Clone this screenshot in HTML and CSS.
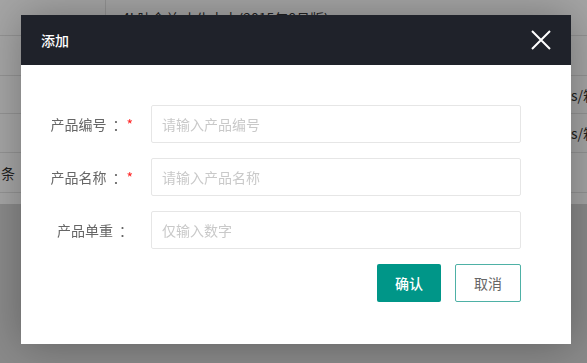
FILE: index.html
```html
<!DOCTYPE html>
<html lang="zh">
<head>
<meta charset="utf-8">
<title>添加</title>
<link rel="stylesheet" href="styles.css">
</head>
<body>
<div class="page">
  <div class="table">
    <div class="row head">
      <div class="c1"></div>
      <div class="c2">4L肺含益 小牛力力(2015年8月版)</div>
    </div>
    <div class="row h40"><div class="c-left"></div><div class="c-right"></div></div>
    <div class="row h38"><div class="c-left"></div><div class="c-right">s/箱</div></div>
    <div class="row h39"><div class="c-left"></div><div class="c-right">s/箱</div></div>
    <div class="row h40"><div class="c-left">条</div><div class="c-right"></div></div>
    <div class="row h11"></div>
  </div>
</div>
<div class="shade"></div>
<div class="modal">
  <div class="modal-head">
    <span class="modal-title">添加</span>
    <span class="close" aria-label="关闭">
      <svg width="20" height="20" viewBox="0 0 20 20"><path d="M1 1 L19 19 M19 1 L1 19" stroke="#fff" stroke-width="2" fill="none"/></svg>
    </span>
  </div>
  <div class="modal-body">
    <div class="form-row">
      <label class="label">产品编号<span class="colon">：</span><span class="req">*</span></label>
      <input class="input" type="text" placeholder="请输入产品编号">
    </div>
    <div class="form-row">
      <label class="label">产品名称<span class="colon">：</span><span class="req">*</span></label>
      <input class="input" type="text" placeholder="请输入产品名称">
    </div>
    <div class="form-row">
      <label class="label">产品单重<span class="colon">：</span></label>
      <input class="input" type="text" placeholder="仅输入数字">
    </div>
    <div class="actions">
      <button class="btn btn-ok">确认</button>
      <button class="btn btn-cancel">取消</button>
    </div>
  </div>
</div>
</body>
</html>
```
FILE: styles.css
```css
* { box-sizing: border-box; }
html, body {
  margin: 0;
  padding: 0;
  width: 587px;
  height: 363px;
  overflow: hidden;
  font-family: "Noto Sans CJK SC", "Noto Sans", "Liberation Sans", sans-serif;
  font-size: 14px;
}
.page {
  width: 587px;
  height: 363px;
  background: #d6d6d6;
}
.table {
  background: #fff;
  color: #333;
}
.row {
  display: flex;
  border-bottom: 1px solid #e4e4e4;
}
.head { height: 36px; }
.h40 { height: 40px; }
.h38 { height: 38px; }
.h39 { height: 39px; }
.h11 { height: 11px; border-bottom: none; }
.c1 {
  width: 106px;
  border-right: 1px solid #e4e4e4;
}
.c2 {
  padding-left: 16px;
  line-height: 36px;
  white-space: nowrap;
}
.c-left {
  flex: 1;
  display: flex;
  align-items: center;
  padding-left: 1px;
}
.c-right {
  width: 16px;
  display: flex;
  align-items: center;
  white-space: nowrap;
  overflow: hidden;
}
.shade {
  position: fixed;
  inset: 0;
  background: rgba(0, 0, 0, 0.353);
}
.modal {
  position: absolute;
  left: 21px;
  top: 15px;
  width: 550px;
  background: #fff;
  box-shadow: 1px 1px 40px rgba(0, 0, 0, 0.3);
}
.modal-head {
  height: 50px;
  background: #1f222a;
  color: #fff;
  display: flex;
  align-items: center;
  justify-content: space-between;
  padding: 0 20px 0 20px;
}
.modal-title {
  font-size: 14px;
  font-weight: 500;
}
.close {
  display: flex;
  width: 20px;
  height: 20px;
}
.modal-body {
  padding: 40px 50px 42px 0;
}
.form-row {
  display: flex;
  align-items: center;
  margin-bottom: 15px;
}
.label {
  width: 112px;
  text-align: right;
  color: #666;
  margin-right: 18px;
  white-space: nowrap;
}
.colon {
  margin-left: 6px;
}
.req {
  color: #f22;
}
.input {
  flex: 1;
  height: 38px;
  border: 1px solid #e6e6e6;
  border-radius: 2px;
  padding: 0 10px;
  font-family: inherit;
  font-size: 14px;
  color: #333;
  outline: none;
}
.input::placeholder {
  color: #c9c9c9;
}
.actions {
  display: flex;
  justify-content: flex-end;
  gap: 14px;
}
.btn {
  height: 38px;
  border-radius: 2px;
  font-family: inherit;
  font-size: 14px;
  padding: 0;
  cursor: pointer;
}
.btn-ok {
  width: 64px;
  background: #009688;
  color: #fff;
  border: none;
  font-weight: 500;
}
.btn-cancel {
  width: 66px;
  background: #fff;
  color: #666;
  border: 1px solid #4eb1a6;
}
```
